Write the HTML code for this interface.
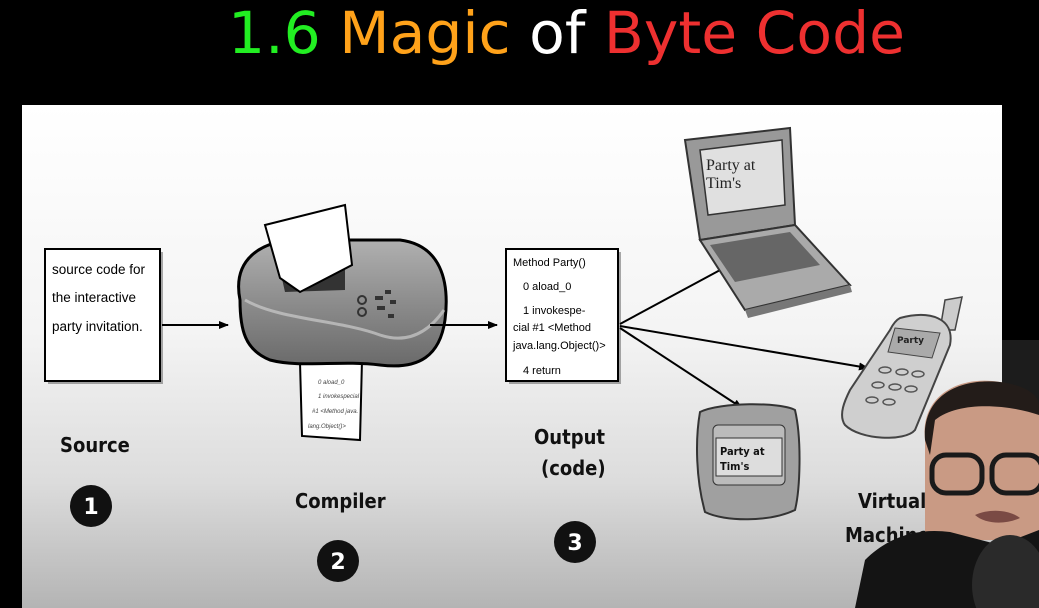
<!DOCTYPE html>
<html><head><meta charset="utf-8"><style>
html,body{margin:0;padding:0;background:#000;width:1039px;height:608px;overflow:hidden}
svg{display:block}
</style></head><body>
<svg width="1039" height="608" viewBox="0 0 1039 608" xmlns="http://www.w3.org/2000/svg">
<defs>
<linearGradient id="bg" x1="0" y1="0" x2="0" y2="1">
<stop offset="0" stop-color="#ffffff"/><stop offset="0.45" stop-color="#f4f4f4"/><stop offset="0.75" stop-color="#dcdcdc"/><stop offset="1" stop-color="#b4b4b4"/>
</linearGradient>
<linearGradient id="prn" x1="0" y1="0" x2="0" y2="1">
<stop offset="0" stop-color="#b0b0b0"/><stop offset="0.5" stop-color="#8c8c8c"/><stop offset="1" stop-color="#6a6a6a"/>
</linearGradient>
<marker id="ah" markerWidth="10" markerHeight="8" refX="9" refY="4" orient="auto" markerUnits="userSpaceOnUse"><path d="M0,0 L10,4 L0,8 z" fill="#000"/></marker>
</defs>
<rect x="0" y="0" width="1039" height="608" fill="#000"/>
<rect x="1002" y="340" width="37" height="268" fill="#1c1c1c"/>
<rect x="22" y="105" width="980" height="503" fill="url(#bg)"/>

<!-- title -->
<text x="228" y="53" font-family="'DejaVu Sans','Liberation Sans',sans-serif" font-size="58" textLength="677" lengthAdjust="spacingAndGlyphs"><tspan fill="#22ee22">1.6 </tspan><tspan fill="#ffa21a">Magic </tspan><tspan fill="#ffffff">of </tspan><tspan fill="#ee3030">Byte Code</tspan></text>

<!-- source box -->
<rect x="48" y="252" width="115" height="132" fill="#555" opacity="0.5"/>
<rect x="45" y="249" width="115" height="132" fill="#fff" stroke="#000" stroke-width="2"/>
<g font-family="'Liberation Sans',sans-serif" font-size="13.5" fill="#000">
<text x="52" y="274">source code for</text>
<text x="52" y="302">the interactive</text>
<text x="52" y="331">party invitation.</text>
</g>
<line x1="162" y1="325" x2="228" y2="325" stroke="#000" stroke-width="2" marker-end="url(#ah)"/>

<!-- printer -->
<path d="M300,362 L362,360 L360,440 L302,436 z" fill="#fff" stroke="#000" stroke-width="2"/>
<g font-family="'Liberation Sans',sans-serif" font-size="6" fill="#444" font-style="italic"><text x="318" y="384">0 aload_0</text><text x="318" y="398">1 invokespecial</text><text x="312" y="413">#1 &lt;Method java.</text><text x="308" y="428">lang.Object()&gt;</text></g>
<path d="M240,300 C232,260 260,240 300,240 L400,240 C440,245 450,280 445,320 C440,355 420,370 380,365 C340,360 300,368 270,360 C245,350 240,330 240,300 z" fill="url(#prn)" stroke="#000" stroke-width="3"/>
<path d="M245,300 C280,320 340,320 380,335 C410,345 430,330 444,310" fill="none" stroke="#ccc" stroke-width="3" opacity="0.7"/>
<path d="M280,270 L345,262 L345,290 L285,292 z" fill="#333"/>
<path d="M265,225 L345,205 L352,265 L300,292 L280,278 z" fill="#fff" stroke="#000" stroke-width="2"/>
<g fill="#333"><circle cx="362" cy="300" r="4" fill="none" stroke="#333" stroke-width="2"/><circle cx="362" cy="312" r="4" fill="none" stroke="#333" stroke-width="2"/><rect x="375" y="296" width="8" height="4"/><rect x="377" y="306" width="8" height="4"/><rect x="385" y="290" width="6" height="4"/><rect x="390" y="300" width="6" height="4"/><rect x="388" y="314" width="6" height="4"/></g>
<line x1="430" y1="325" x2="497" y2="325" stroke="#000" stroke-width="2" marker-end="url(#ah)"/>

<!-- output box -->
<rect x="509" y="252" width="112" height="132" fill="#555" opacity="0.5"/>
<rect x="506" y="249" width="112" height="132" fill="#fff" stroke="#000" stroke-width="2"/>
<g font-family="'Liberation Sans',sans-serif" font-size="11" fill="#000">
<text x="513" y="266">Method Party()</text>
<text x="523" y="290">0 aload_0</text>
<text x="523" y="314">1 invokespe-</text>
<text x="513" y="331">cial #1 &lt;Method</text>
<text x="513" y="349">java.lang.Object()&gt;</text>
<text x="523" y="374">4 return</text>
</g>
<g stroke="#000" stroke-width="2" marker-end="url(#ah)">
<line x1="620" y1="324" x2="735" y2="262"/>
<line x1="620" y1="326" x2="868" y2="368"/>
<line x1="620" y1="328" x2="742" y2="408"/>
</g>

<!-- labels -->
<g font-family="'DejaVu Sans Condensed','DejaVu Sans',sans-serif" font-weight="bold" font-size="20" fill="#111">
<text x="60" y="452">Source</text>
<text x="295" y="508">Compiler</text>
<text x="534" y="444">Output</text>
<text x="541" y="475">(code)</text>
<text x="858" y="508">Virtual</text>
<text x="845" y="542">Machine</text>
</g>
<g font-family="'DejaVu Sans',sans-serif" font-weight="bold" font-size="22" fill="#fff" text-anchor="middle">
<circle cx="91" cy="506" r="21" fill="#111"/><text x="91" y="514">1</text>
<circle cx="338" cy="561" r="21" fill="#111"/><text x="338" y="569">2</text>
<circle cx="575" cy="542" r="21" fill="#111"/><text x="575" y="550">3</text>
</g>

<!-- laptop -->
<path d="M685,140 L790,128 L795,225 L700,240 z" fill="#999" stroke="#333" stroke-width="2"/>
<path d="M700,150 L782,140 L785,205 L708,215 z" fill="#e0e0e0" stroke="#333" stroke-width="1.5"/>
<text x="706" y="170" font-family="'Liberation Serif',serif" font-size="16" fill="#222">Party at</text>
<text x="706" y="188" font-family="'Liberation Serif',serif" font-size="16" fill="#222">Tim's</text>
<path d="M700,240 L795,225 L850,285 L745,310 z" fill="#aaa" stroke="#333" stroke-width="2"/>
<path d="M710,245 L790,232 L820,265 L735,282 z" fill="#666"/>
<path d="M745,310 L850,285 L852,292 L748,318 z" fill="#777"/>

<!-- phone -->
<path d="M945,300 L962,297 L955,330 L940,330 z" fill="#ccc" stroke="#444" stroke-width="1.5"/>
<path d="M900,318 C930,310 955,318 950,345 L915,430 C905,442 860,440 845,425 C838,415 845,400 850,390 L890,330 C893,324 896,320 900,318 z" fill="#cfcfcf" stroke="#444" stroke-width="2"/>
<path d="M895,328 L940,333 L932,358 L888,352 z" fill="#aaa" stroke="#444"/>
<text x="897" y="343" font-family="'DejaVu Sans',sans-serif" font-weight="bold" font-size="9" fill="#222">Party</text>
<g fill="none" stroke="#555" stroke-width="1.5"><ellipse cx="885" cy="370" rx="6" ry="3"/><ellipse cx="902" cy="372" rx="6" ry="3"/><ellipse cx="918" cy="374" rx="6" ry="3"/><ellipse cx="878" cy="385" rx="6" ry="3"/><ellipse cx="895" cy="387" rx="6" ry="3"/><ellipse cx="911" cy="389" rx="6" ry="3"/><ellipse cx="872" cy="400" rx="6" ry="3"/><ellipse cx="889" cy="402" rx="6" ry="3"/></g>

<!-- pager -->
<path d="M700,412 C720,402 780,402 795,410 C802,440 800,490 795,510 C770,522 725,522 705,512 C696,480 695,440 700,412 z" fill="#a0a0a0" stroke="#333" stroke-width="2"/>
<rect x="713" y="425" width="72" height="60" rx="5" fill="#bbb" stroke="#333"/>
<rect x="716" y="438" width="66" height="38" fill="#ddd" stroke="#333"/>
<text x="720" y="455" font-family="'DejaVu Sans Condensed',sans-serif" font-weight="bold" font-size="11" fill="#111">Party at</text>
<text x="720" y="470" font-family="'DejaVu Sans Condensed',sans-serif" font-weight="bold" font-size="11" fill="#111">Tim's</text>

<!-- webcam person -->
<path d="M925,440 C920,395 960,375 1000,382 C1030,388 1039,400 1039,410 L1039,540 L925,540 z" fill="#c99a84"/>
<path d="M925,440 C922,395 960,378 1000,382 C1025,385 1039,395 1039,405 L1039,415 C1010,405 960,400 935,420 L930,455 z" fill="#231c19"/>
<g fill="none" stroke="#1a1a1a" stroke-width="5"><rect x="932" y="455" width="50" height="38" rx="14"/><rect x="992" y="455" width="50" height="38" rx="14"/></g>
<path d="M975,515 C990,508 1010,510 1020,518 C1005,525 985,524 975,515 z" fill="#7a4a44"/>
<path d="M855,608 L865,560 C890,535 920,528 950,532 L1000,545 L1039,530 L1039,608 z" fill="#141414"/>
<ellipse cx="1010" cy="585" rx="38" ry="50" fill="#2a2a2a"/>
</svg>
</body></html>
